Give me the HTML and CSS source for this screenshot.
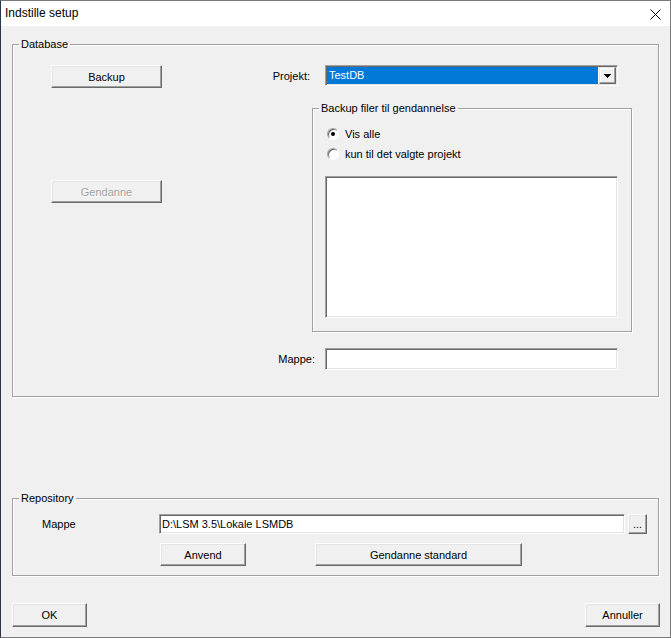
FILE: index.html
```html
<!DOCTYPE html>
<html>
<head>
<meta charset="utf-8">
<title>Indstille setup</title>
<link rel="stylesheet" href="styles.css">
</head>
<body>
<div class="window">
  <div class="titlebar">
    <span class="title">Indstille setup</span>
    <span class="close"><svg width="11" height="11" viewBox="0 0 11 11"><path d="M0.5 0.5L10.5 10.5M10.5 0.5L0.5 10.5" stroke="#000" stroke-width="1" fill="none"/></svg></span>
  </div>
  <div class="client">
    <div class="group db">
      <span class="group-title">Database</span>
      <div class="db-grid">
        <div class="db-left">
          <button class="btn btn-wide">Backup</button>
          <button class="btn btn-wide btn-restore" disabled>Gendanne</button>
        </div>
        <div class="db-right">
          <div class="row">
            <span class="lbl lbl-projekt">Projekt:</span>
            <div class="combo sunken">
              <span class="combo-value">TestDB</span>
              <span class="combo-btn"><svg width="7" height="4" viewBox="0 0 7 4"><path d="M0 0H7L3.5 4Z" fill="#000"/></svg></span>
            </div>
          </div>
          <div class="group inner">
            <span class="group-title">Backup filer til gendannelse</span>
            <label class="radio-row"><span class="radio checked"></span>Vis alle</label>
            <label class="radio-row"><span class="radio"></span>kun til det valgte projekt</label>
            <div class="listbox sunken"></div>
          </div>
          <div class="row mappe-row">
            <span class="lbl lbl-mappe">Mappe:</span>
            <div class="field sunken"></div>
          </div>
        </div>
      </div>
    </div>

    <div class="group repo">
      <span class="group-title">Repository</span>
      <div class="repo-row">
        <span class="repo-lbl">Mappe</span>
        <div class="path sunken">D:\LSM 3.5\Lokale LSMDB</div>
        <button class="btn btn-dots">...</button>
      </div>
      <div class="repo-actions">
        <button class="btn btn-anvend">Anvend</button>
        <button class="btn btn-std">Gendanne standard</button>
      </div>
    </div>

    <div class="footer">
      <button class="btn btn-ok">OK</button>
      <button class="btn btn-cancel">Annuller</button>
    </div>
  </div>
</div>
</body>
</html>
```

FILE: styles.css
```css
html, body {
  margin: 0;
  padding: 0;
  background: #f0f0f0;
}

body {
  font-family: "Liberation Sans", Arial, sans-serif;
  font-size: 11px;
  color: #000;
}

.window {
  width: 671px;
  height: 638px;
  box-sizing: border-box;
  border: 1px solid #7a7a7a;
  border-left-color: #2a3645;
  background: #f0f0f0;
  display: flex;
  flex-direction: column;
}

.titlebar {
  height: 25px;
  background: #fff;
  display: flex;
  align-items: center;
  justify-content: space-between;
  padding: 0 9px 0 4px;
  flex: none;
}

.title {
  font-size: 12px;
  line-height: 15px;
}

.close {
  display: flex;
  margin-top: 1px;
}

.client {
  flex: 1;
  padding: 18px 11px 0 11px;
}

/* group boxes */
.group {
  position: relative;
  box-sizing: border-box;
  border: 1px solid #a0a0a0;
  box-shadow: inset 1px 1px #fff, 1px 1px #fff;
}

.group-title {
  position: absolute;
  top: -7px;
  left: 6px;
  padding: 0 2px;
  line-height: 13px;
  background: #f0f0f0;
  white-space: nowrap;
}

/* sunken controls */
.sunken {
  box-sizing: border-box;
  border: 1px solid;
  border-color: #a0a0a0 #fff #fff #a0a0a0;
  box-shadow: inset 1px 1px #696969, inset -1px -1px #e3e3e3;
  background: #fff;
}

/* buttons */
.btn {
  box-sizing: border-box;
  margin: 0;
  padding: 0;
  font-family: "Liberation Sans", Arial, sans-serif;
  font-size: 11px;
  color: #000;
  background: #f0f0f0;
  border: 1px solid;
  border-color: #fff #696969 #696969 #fff;
  box-shadow: inset -1px -1px #a0a0a0, inset 1px 1px #e3e3e3;
  height: 23px;
}

.btn-wide {
  width: 111px;
}

.btn-restore {
  margin-top: 92px;
  color: #a0a0a0;
  text-shadow: 1px 1px #fff;
}

/* database group */
.db {
  height: 353px;
}

.db-grid {
  display: grid;
  grid-template-columns: 111px 1fr;
  column-gap: 100px;
  padding: 20px 0 0 38px;
}

.db-left {
  display: flex;
  flex-direction: column;
  align-items: flex-start;
}

.row {
  display: flex;
  align-items: center;
}

.lbl {
  width: 63px;
  box-sizing: border-box;
  text-align: right;
}

.lbl-projekt {
  padding-right: 15px;
}

.lbl-mappe {
  padding-right: 10px;
}

.combo {
  width: 293px;
  height: 21px;
  padding: 1px;
  display: flex;
}

.combo-value {
  flex: 1;
  background: #0078d7;
  color: #fff;
  padding-left: 2px;
  line-height: 17px;
  margin-right: 1px;
}

.combo-btn {
  width: 17px;
  height: 17px;
  box-sizing: border-box;
  background: #f0f0f0;
  border: 1px solid;
  border-color: #e3e3e3 #696969 #696969 #e3e3e3;
  box-shadow: inset -1px -1px #a0a0a0, inset 1px 1px #fff;
  display: flex;
  align-items: center;
  justify-content: center;
}

.combo-btn svg {
  display: block;
  shape-rendering: crispEdges;
}

.inner {
  margin: 22px 0 0 50px;
  width: 320px;
  height: 224px;
  padding: 15px 0 0 12px;
}

.radio-row {
  height: 20px;
  display: flex;
  align-items: center;
  gap: 6px;
  padding-left: 2px;
}

.radio {
  width: 12px;
  height: 12px;
  box-sizing: border-box;
  border-radius: 50%;
  border: 1px solid;
  border-color: #a0a0a0 #fff #fff #a0a0a0;
  box-shadow: inset 1px 1px #696969;
  background: #fff;
  display: flex;
  align-items: center;
  justify-content: center;
}

.radio.checked::after {
  content: "";
  width: 4px;
  height: 4px;
  border-radius: 50%;
  background: #000;
}

.listbox {
  margin-top: 12px;
  width: 293px;
  height: 142px;
}

.mappe-row {
  margin-top: 16px;
}

.field {
  width: 293px;
  height: 22px;
}

/* repository group */
.repo {
  margin-top: 101px;
  height: 78px;
  padding-top: 15px;
}

.repo-row {
  display: flex;
  align-items: center;
}

.repo-lbl {
  width: 146px;
  box-sizing: border-box;
  padding-left: 29px;
}

.path {
  width: 466px;
  height: 20px;
  line-height: 18px;
  padding-left: 2px;
  white-space: nowrap;
}

.btn-dots {
  margin-left: 3px;
  width: 19px;
  height: 20px;
  line-height: 12px;
}

.repo-actions {
  display: flex;
  margin-top: 9px;
  padding-left: 147px;
}

.btn-anvend {
  width: 86px;
}

.btn-std {
  margin-left: 69px;
  width: 207px;
}

/* footer */
.footer {
  display: flex;
  justify-content: space-between;
  margin-top: 27px;
}

.btn-ok,
.btn-cancel {
  width: 75px;
  height: 24px;
}

.btn-cancel {
  margin-right: -1px;
}
```
